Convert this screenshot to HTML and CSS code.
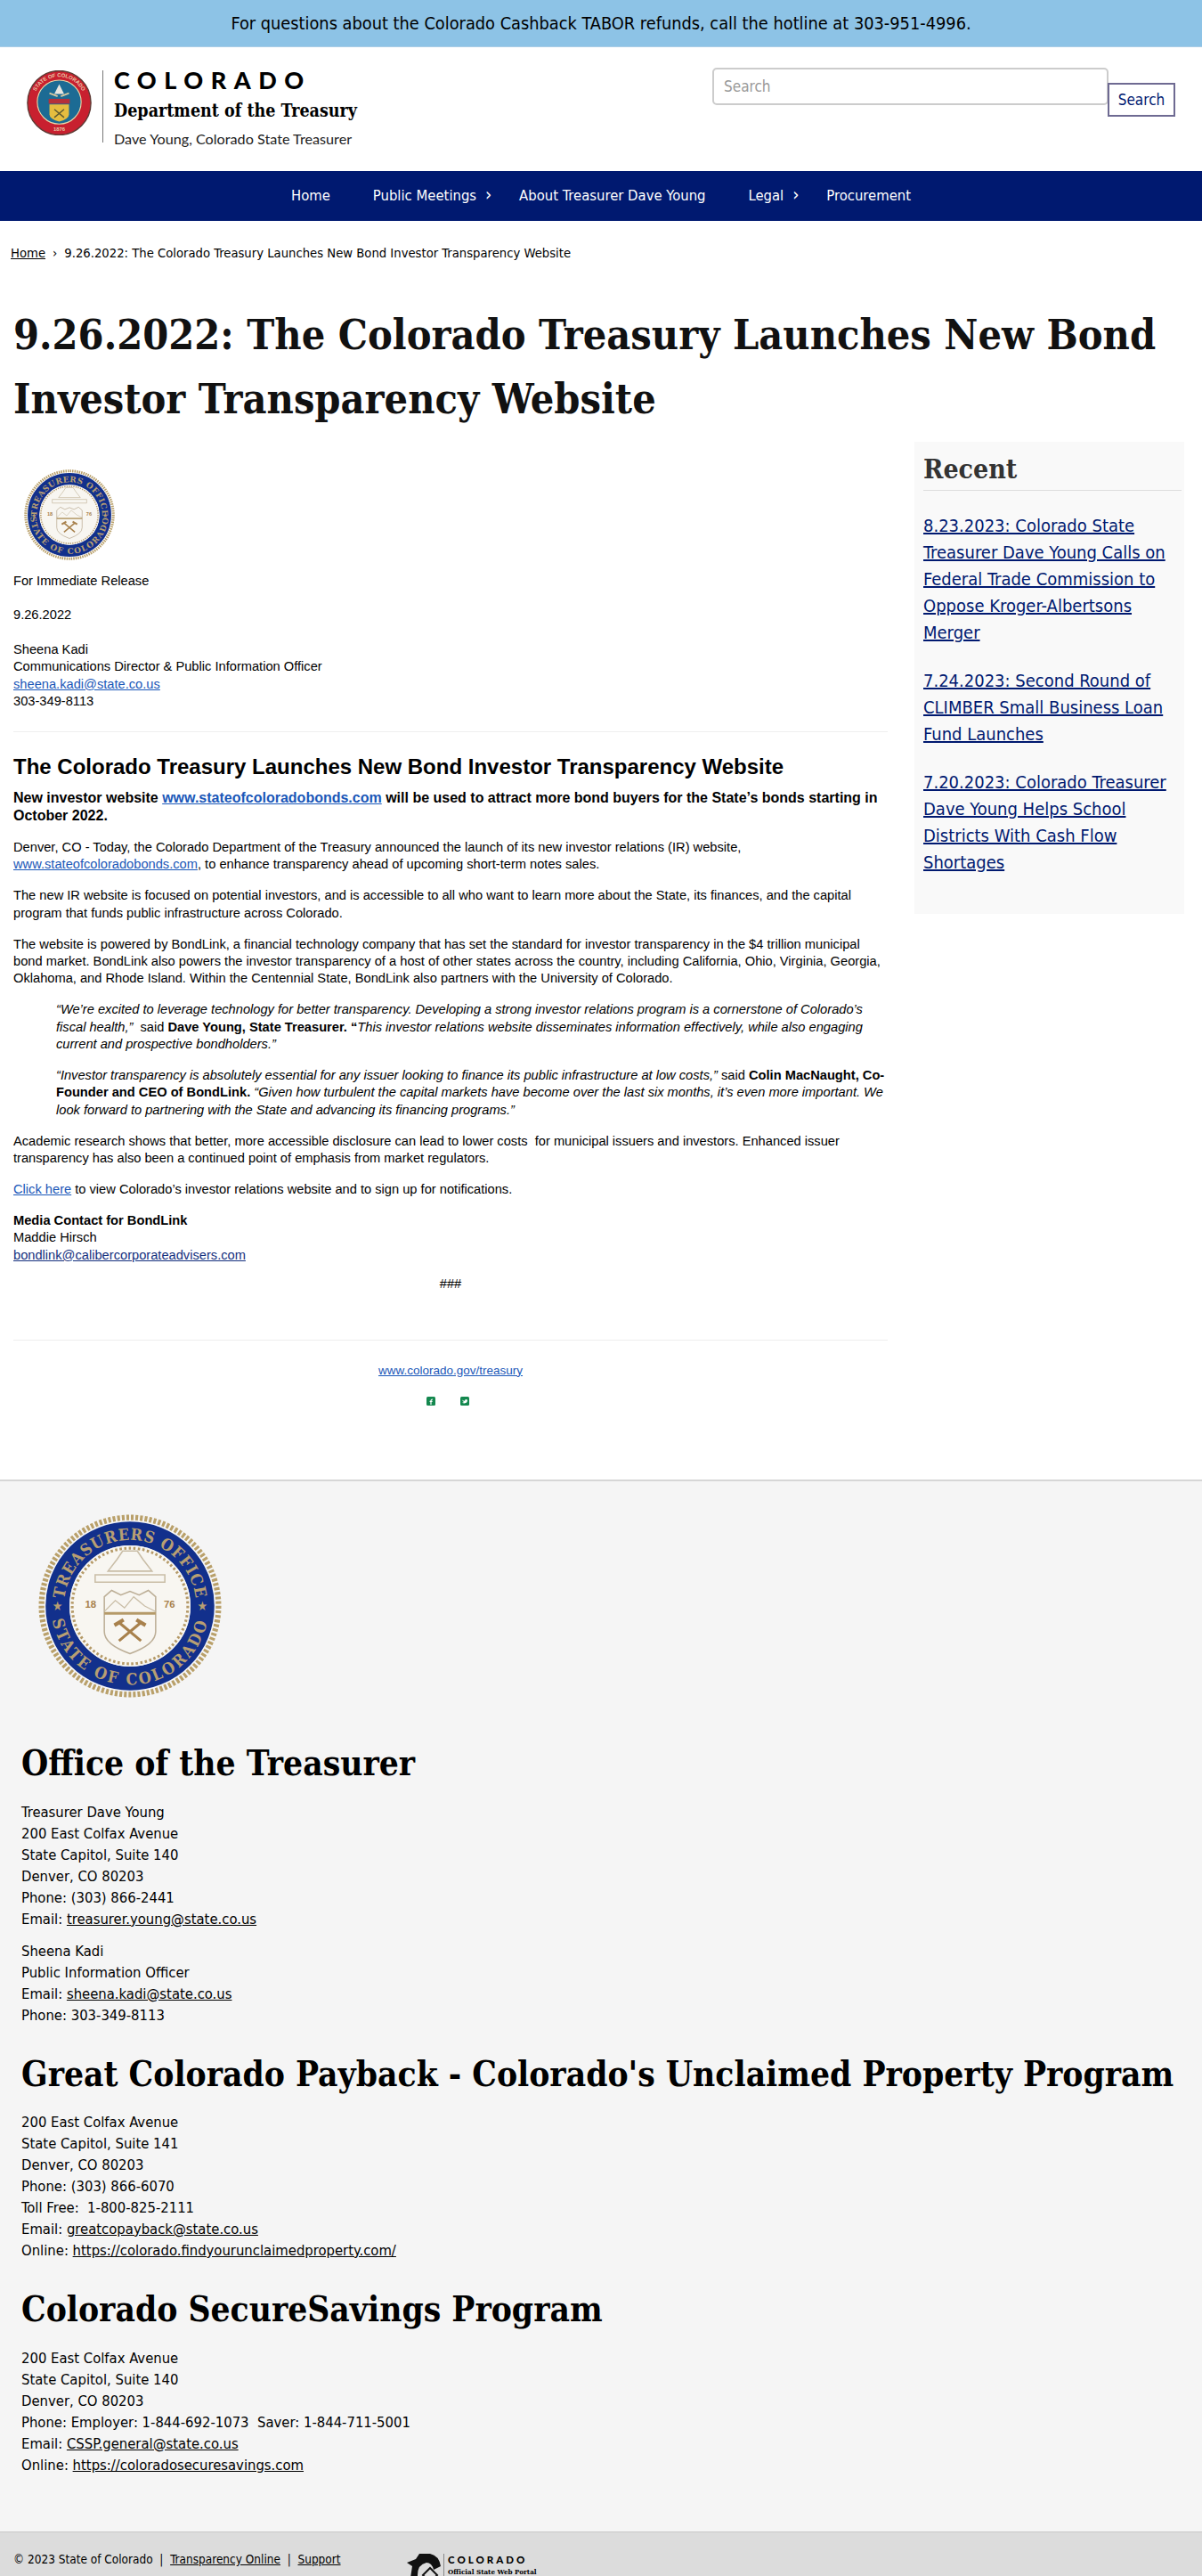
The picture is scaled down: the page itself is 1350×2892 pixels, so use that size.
FILE: index.html
```html
<!DOCTYPE html>
<html lang="en">
<head>
  <meta charset="UTF-8">
  <meta name="viewport" content="width=device-width, initial-scale=1.0">
  <title>9.26.2022: The Colorado Treasury Launches New Bond Investor Transparency Website</title>
  <link rel="stylesheet" href="styles.css">
</head>
<body>
  <!-- shared seal, used in the release and in the footer -->
  <svg class="defs" width="0" height="0" aria-hidden="true">
    <defs>
      <symbol id="treasury-seal" viewBox="0 0 200 200">
        <path id="seal-top" d="M37.6 136A72 72 0 1 1 162.4 136" fill="none"/>
        <path id="seal-bottom" d="M25.5 57A86 86 0 1 0 174.5 57" fill="none"/>
        <circle cx="100" cy="100" r="96.5" fill="none" stroke="#b9a06a" stroke-width="6" stroke-dasharray="3 2"/>
        <circle cx="100" cy="100" r="79" fill="none" stroke="#12308c" stroke-width="26"/>
        <circle cx="100" cy="100" r="66" fill="#f8f6f1"/>
        <circle cx="100" cy="100" r="63" fill="none" stroke="#b59a68" stroke-width="3" stroke-dasharray="2.5 2.5"/>
        <text class="seal-text"><textPath href="#seal-top" startOffset="50%" text-anchor="middle">TREASURERS OFFICE</textPath></text>
        <text class="seal-text seal-text-low"><textPath href="#seal-bottom" startOffset="50%" text-anchor="middle">STATE OF COLORADO</textPath></text>
        <text class="seal-star" x="21" y="105" text-anchor="middle">★</text>
        <text class="seal-star" x="179" y="105" text-anchor="middle">★</text>
        <path d="M76 62h48l-10-13-6-9h-16l-6 9zM62 66h76v8H62z" fill="none" stroke="#c9bda6" stroke-width="1.5"/>
        <path d="M72 90l8-7 10 5 10-4 10 4 10-5 8 7v38q0 14-28 24-28-10-28-24z" fill="#f8f6f1" stroke="#bcae96" stroke-width="1.5"/>
        <path d="M72 106l12-12 10 8 10-12 12 10 12 6" fill="none" stroke="#c9bda6" stroke-width="1.2"/>
        <path d="M72 108h56" stroke="#b59a68" stroke-width="3"/>
        <path d="M88 118l24 20M112 118l-24 20" stroke="#a8814c" stroke-width="3"/>
        <path d="M83 121l10-6M107 115l10 6" stroke="#a8814c" stroke-width="4"/>
        <text class="seal-year" x="57" y="102" text-anchor="middle">18</text>
        <text class="seal-year" x="143" y="102" text-anchor="middle">76</text>
      </symbol>
    </defs>
  </svg>

  <div class="alert-bar">For questions about the Colorado Cashback TABOR refunds, call the hotline at 303-951-4996.</div>

  <header class="site-header">
    <a class="brand" href="#">
      <svg class="state-seal" viewBox="0 0 80 80" aria-hidden="true">
        <path id="state-ring" d="M8 40a32 32 0 0 1 64 0" fill="none"/>
        <ellipse cx="40" cy="40" rx="39" ry="39.5" fill="#c8202f" stroke="#5d3a34" stroke-width="1.5"/>
        <circle cx="40" cy="39" r="27" fill="#1c6b94" stroke="#e9d9a8" stroke-width="1.2"/>
        <text class="state-seal-text"><textPath href="#state-ring" startOffset="50%" text-anchor="middle">STATE OF COLORADO</textPath></text>
        <text class="state-seal-text" x="40" y="75" text-anchor="middle">1876</text>
        <path d="M40 17l6 12H34z" fill="#e8e6df"/>
        <path d="M28 28l10 4M52 28l-10 4" stroke="#d8c9a0" stroke-width="2"/>
        <path d="M27 35h26v6H27z" fill="#b5303a"/>
        <path d="M28 42h24v12q0 6-12 9-12-3-12-9z" fill="#e5bd3f"/>
        <path d="M34 48l12 10M46 48l-12 10" stroke="#5e5a30" stroke-width="1.6"/>
      </svg>
      <span class="brand-text">
        <span class="brand-state">COLORADO</span>
        <span class="brand-dept">Department of the Treasury</span>
        <span class="brand-name">Dave Young, Colorado State Treasurer</span>
      </span>
    </a>
    <form class="search-form">
      <input class="search-input" type="text" placeholder="Search">
      <button class="search-button" type="button">Search</button>
    </form>
  </header>

  <nav class="main-nav">
    <a href="#">Home</a>
    <a class="has-sub" href="#">Public Meetings</a>
    <a href="#">About Treasurer Dave Young</a>
    <a class="has-sub" href="#">Legal</a>
    <a href="#">Procurement</a>
  </nav>

  <div class="breadcrumb"><a href="#">Home</a><span class="crumb-sep">›</span>9.26.2022: The Colorado Treasury Launches New Bond Investor Transparency Website</div>

  <h1 class="page-title">9.26.2022: The Colorado Treasury Launches New Bond Investor Transparency Website</h1>

  <main class="content">
    <article class="release">
      <svg class="release-seal"><use href="#treasury-seal"/></svg>
      <p class="release-meta">For Immediate Release</p>
      <p class="release-meta">9.26.2022</p>
      <p>Sheena Kadi<br>Communications Director &amp; Public Information Officer<br><a href="#">sheena.kadi@state.co.us</a><br>303-349-8113</p>
      <hr class="release-rule">
      <h2 class="release-title">The Colorado Treasury Launches New Bond Investor Transparency Website</h2>
      <p class="lead">New investor website <a href="#">www.stateofcoloradobonds.com</a> will be used to attract more bond buyers for the State’s bonds starting in October 2022.</p>
      <p>Denver, CO - Today, the Colorado Department of the Treasury announced the launch of its new investor relations (IR) website, <a href="#">www.stateofcoloradobonds.com</a>, to enhance transparency ahead of upcoming short-term notes sales.</p>
      <p>The new IR website is focused on potential investors, and is accessible to all who want to learn more about the State, its finances, and the capital program that funds public infrastructure across Colorado.</p>
      <p>The website is powered by BondLink, a financial technology company that has set the standard for investor transparency in the $4 trillion municipal bond market. BondLink also powers the investor transparency of a host of other states across the country, including California, Ohio, Virginia, Georgia, Oklahoma, and Rhode Island. Within the Centennial State, BondLink also partners with the University of Colorado.</p>
      <blockquote>
        <p><em>“We’re excited to leverage technology for better transparency. Developing a strong investor relations program is a cornerstone of Colorado’s fiscal health,”</em>&nbsp; said <strong>Dave Young, State Treasurer. “</strong><em>This investor relations website disseminates information effectively, while also engaging current and prospective bondholders.”</em></p>
        <p><em>“Investor transparency is absolutely essential for any issuer looking to finance its public infrastructure at low costs,”</em> said <strong>Colin MacNaught, Co-Founder and CEO of BondLink.</strong> <em>“Given how turbulent the capital markets have become over the last six months, it’s even more important. We look forward to partnering with the State and advancing its financing programs.”</em></p>
      </blockquote>
      <p>Academic research shows that better, more accessible disclosure can lead to lower costs&nbsp; for municipal issuers and investors. Enhanced issuer transparency has also been a continued point of emphasis from market regulators.</p>
      <p><a href="#">Click here</a> to view Colorado’s investor relations website and to sign up for notifications.</p>
      <p class="media-contact"><strong>Media Contact for BondLink</strong><br>Maddie Hirsch<br><a class="dark-link" href="#">bondlink@calibercorporateadvisers.com</a></p>
      <p class="centered">###</p>
      <hr class="release-rule end-rule">
      <p class="centered site-link"><a href="#">www.colorado.gov/treasury</a></p>
      <div class="social">
        <svg viewBox="0 0 10 10" aria-label="Facebook"><rect width="10" height="10" rx="1.5" fill="#14884f"/><path d="M5 9V4.5q0-1.5 2-1.5M3.6 5.4h3" fill="none" stroke="#fff" stroke-width="1.2"/></svg>
        <svg viewBox="0 0 10 10" aria-label="Twitter"><rect width="10" height="10" rx="1.5" fill="#14884f"/><path d="M2 3.5q1.5 1.3 3 1.3 0-1.8 1.5-1.8 1 0 1.5 1 0 3-3.5 3.5-1.5 0-2.5-.7 1.5 0 2-.7-1.5-.6-2-3.1z" fill="#fff"/></svg>
      </div>
    </article>

    <aside class="recent">
      <h2 class="recent-title">Recent</h2>
      <ul class="recent-list">
        <li><a href="#">8.23.2023: Colorado State Treasurer Dave Young Calls on Federal Trade Commission to Oppose Kroger-Albertsons Merger</a></li>
        <li><a href="#">7.24.2023: Second Round of CLIMBER Small Business Loan Fund Launches</a></li>
        <li><a href="#">7.20.2023: Colorado Treasurer Dave Young Helps School Districts With Cash Flow Shortages</a></li>
      </ul>
    </aside>
  </main>

  <footer class="site-footer">
    <svg class="footer-seal"><use href="#treasury-seal"/></svg>

    <h2>Office of the Treasurer</h2>
    <p>Treasurer Dave Young<br>200 East Colfax Avenue<br>State Capitol, Suite 140<br>Denver, CO 80203<br>Phone: (303) 866-2441<br>Email: <a href="#">treasurer.young@state.co.us</a></p>
    <p>Sheena Kadi<br>Public Information Officer<br>Email: <a href="#">sheena.kadi@state.co.us</a><br>Phone: 303-349-8113</p>

    <h2>Great Colorado Payback - Colorado's Unclaimed Property Program</h2>
    <p>200 East Colfax Avenue<br>State Capitol, Suite 141<br>Denver, CO 80203<br>Phone: (303) 866-6070<br>Toll Free:&nbsp; 1-800-825-2111<br>Email: <a href="#">greatcopayback@state.co.us</a><br>Online: <a href="#">https://colorado.findyourunclaimedproperty.com/</a></p>

    <h2>Colorado SecureSavings Program</h2>
    <p>200 East Colfax Avenue<br>State Capitol, Suite 140<br>Denver, CO 80203<br>Phone: Employer: 1-844-692-1073&nbsp; Saver: 1-844-711-5001<br>Email: <a href="#">CSSP.general@state.co.us</a><br>Online: <a href="#">https://coloradosecuresavings.com</a></p>
  </footer>

  <div class="bottom-bar">
    <div class="legal">© 2023 State of Colorado &nbsp;|&nbsp; <a href="#">Transparency Online</a> &nbsp;|&nbsp; <a href="#">Support</a></div>
    <div class="portal-logo">
      <svg class="portal-mark" viewBox="0 0 40 40" aria-hidden="true">
        <path d="M4 40L8 14 2 10 12 6 16 0h12q10 2 12 14l-8 4q-2-8-8-8-10 2-10 14 0 10 8 12l-2 4z" fill="#111"/>
        <path d="M20 24l8-8 8 8-8 8z" fill="none" stroke="#111" stroke-width="2"/>
      </svg>
      <div class="portal-text">
        <span class="portal-state">COLORADO</span>
        <span class="portal-sub">Official State Web Portal</span>
      </div>
    </div>
  </div>
</body>
</html>
```

FILE: styles.css
```css
* {
  box-sizing: border-box;
}

html, body {
  margin: 0;
  padding: 0;
}

body {
  height: 2892px;
  overflow: hidden;
  background-color: #fff;
  color: #000;
  font-family: "DejaVu Sans Condensed", "DejaVu Sans", sans-serif;
  font-stretch: condensed;
}

.defs {
  position: absolute;
}

/* seal text */
.seal-text {
  font-family: "DejaVu Serif", serif;
  font-weight: 700;
  font-size: 17.5px;
  letter-spacing: 0.8px;
  fill: #b89f72;
}

.seal-text-low {
  letter-spacing: 2.5px;
}

.seal-star {
  font-size: 14px;
  fill: #b89f72;
}

.seal-year {
  font-family: "Liberation Sans", sans-serif;
  font-weight: 700;
  font-size: 11px;
  fill: #a8814c;
}

.state-seal-text {
  font-family: "Liberation Sans", sans-serif;
  font-weight: 700;
  font-size: 6.5px;
  fill: #e9c8a8;
}

/* top of the page */
.alert-bar {
  height: 53px;
  background-color: #8dc3e6;
  text-align: center;
  font-size: 19.8px;
  line-height: 53px;
  border-bottom: 1px solid #a9cde6;
}

.site-header {
  display: flex;
  justify-content: space-between;
  height: 139px;
  padding: 26px 30px 0;
}

.brand {
  display: flex;
  color: #000;
  text-decoration: none;
}

.state-seal {
  width: 73px;
  height: 73px;
}

.brand-text {
  display: flex;
  flex-direction: column;
  height: 81px;
  margin-left: 12px;
  padding-left: 12px;
  border-left: 1px solid #777;
}

.brand-state {
  font-family: Lato, sans-serif;
  font-stretch: normal;
  font-weight: 900;
  font-size: 27px;
  line-height: 21px;
  letter-spacing: 8.5px;
}

.brand-dept {
  margin-top: 13px;
  font-family: "DejaVu Serif", serif;
  font-stretch: condensed;
  font-weight: 700;
  font-size: 19.5px;
  line-height: 24px;
  white-space: nowrap;
}

.brand-name {
  margin-top: 8px;
  font-family: Lato, sans-serif;
  font-stretch: normal;
  font-size: 16.2px;
  line-height: 22px;
  color: #222;
  white-space: nowrap;
}

.search-form {
  display: flex;
  align-items: flex-start;
}

.search-input {
  width: 445px;
  height: 42px;
  margin-top: -3px;
  padding: 0 11px;
  border: 2px solid #ccc;
  border-radius: 5px;
  font: inherit;
  font-size: 17px;
}

.search-input::placeholder {
  color: #999;
}

.search-button {
  width: 76px;
  height: 38px;
  margin: 14px 0 0 -1px;
  background-color: #fff;
  border: 2px solid #6e6a92;
  color: #001970;
  font: inherit;
  font-size: 17px;
}

.main-nav {
  display: flex;
  justify-content: center;
  height: 56px;
  background-color: #001970;
}

.main-nav a {
  padding: 0 24px;
  color: #fff;
  font-size: 16.5px;
  line-height: 55px;
  text-decoration: none;
  white-space: nowrap;
}

.main-nav .has-sub {
  padding-right: 0;
}

.main-nav .has-sub::after {
  content: "›";
  display: inline-block;
  width: 14px;
  padding-left: 10px;
  font-size: 20px;
  line-height: 1;
  box-sizing: content-box;
}

.breadcrumb {
  margin-top: 26px;
  padding-left: 12px;
  font-size: 14.7px;
  line-height: 20px;
}

.breadcrumb a {
  color: #000;
}

.crumb-sep {
  margin: 0 8px;
}

.page-title {
  margin: 46px 0 0;
  padding: 0 15px;
  font-family: "DejaVu Serif", serif;
  font-stretch: condensed;
  font-weight: 700;
  font-size: 46.4px;
  line-height: 72px;
  color: #111;
}

/* release and sidebar */
.content {
  display: flex;
  align-items: flex-start;
  gap: 30px;
  height: 1177px;
  padding: 12px 20px 0 15px;
}

.release {
  flex: 0 0 982px;
  font-family: "Liberation Sans", Arial, sans-serif;
  font-stretch: normal;
  font-size: 14.67px;
  line-height: 19.4px;
}

.release p {
  margin: 0 0 15.5px;
}

.release .release-meta {
  margin-bottom: 19px;
}

.release a {
  color: #1a57b8;
}

.release a.dark-link {
  color: #14307e;
}

.release-seal {
  display: block;
  width: 102px;
  height: 102px;
  margin: 31px 0 14px 12px;
}

.release-rule {
  margin: 24px 0 24px;
  border: 0;
  border-top: 1px solid #eee;
}

.release-title {
  margin: 0 0 10px;
  font-size: 24px;
  line-height: 30px;
}

.release .lead {
  font-size: 16px;
  line-height: 20px;
  font-weight: 700;
}

.release blockquote {
  margin: 0 0 15.5px 48px;
}

.release .media-contact {
  margin-bottom: 13px;
}

.centered {
  text-align: center;
}

.end-rule {
  margin: 52px 0 24px;
}

.release .site-link {
  margin-bottom: 20px;
  font-size: 13.5px;
}

.social {
  display: flex;
  justify-content: center;
  gap: 28px;
  padding-right: 7px;
}

.social svg {
  width: 10px;
  height: 10px;
}

.recent {
  flex: 0 0 303px;
  height: 530px;
  padding: 12px 3px 0 10px;
  background-color: #f9f9f9;
}

.recent-title {
  margin: 0;
  padding-bottom: 4px;
  border-bottom: 1px solid #ddd;
  font-family: "DejaVu Serif", serif;
  font-stretch: condensed;
  font-weight: 700;
  font-size: 30px;
  line-height: 38px;
  color: #333;
}

.recent-list {
  margin: 24px 0 0;
  padding: 0;
  list-style: none;
}

.recent-list li {
  margin-bottom: 24px;
  font-size: 20px;
  line-height: 30px;
}

.recent-list a {
  color: #001970;
}

/* footer */
.site-footer {
  height: 1181px;
  padding: 0 24px;
  background-color: #f5f5f5;
  border-top: 2px solid #d6d6d6;
  font-size: 16.5px;
  line-height: 24px;
}

.footer-seal {
  display: block;
  width: 206px;
  height: 206px;
  margin: 37px 0 46px 19px;
}

.site-footer h2 {
  margin: 26px 0 14.5px;
  font-family: "DejaVu Serif", serif;
  font-stretch: condensed;
  font-weight: 700;
  font-size: 38.6px;
  line-height: 56px;
  white-space: nowrap;
}

.site-footer p {
  margin: 0 0 12px;
}

.site-footer a {
  color: #000;
}

.bottom-bar {
  display: flex;
  height: 50px;
  padding: 20px 15px 0;
  overflow: hidden;
  background-color: #dcdcdc;
  border-top: 1px solid #c8c8c8;
  font-size: 13.5px;
  line-height: 20px;
}

.legal {
  width: 440px;
}

.legal a {
  color: #000;
}

.portal-logo {
  display: flex;
  gap: 3px;
  margin-top: 4px;
}

.portal-mark {
  width: 40px;
  height: 40px;
}

.portal-text {
  display: flex;
  flex-direction: column;
  padding-left: 4px;
  border-left: 1px solid #888;
}

.portal-state {
  font-family: Lato, sans-serif;
  font-stretch: normal;
  font-weight: 900;
  font-size: 11.5px;
  line-height: 14px;
  letter-spacing: 3px;
}

.portal-sub {
  font-family: "DejaVu Serif", serif;
  font-stretch: condensed;
  font-weight: 700;
  font-size: 8px;
  line-height: 12px;
}
```
